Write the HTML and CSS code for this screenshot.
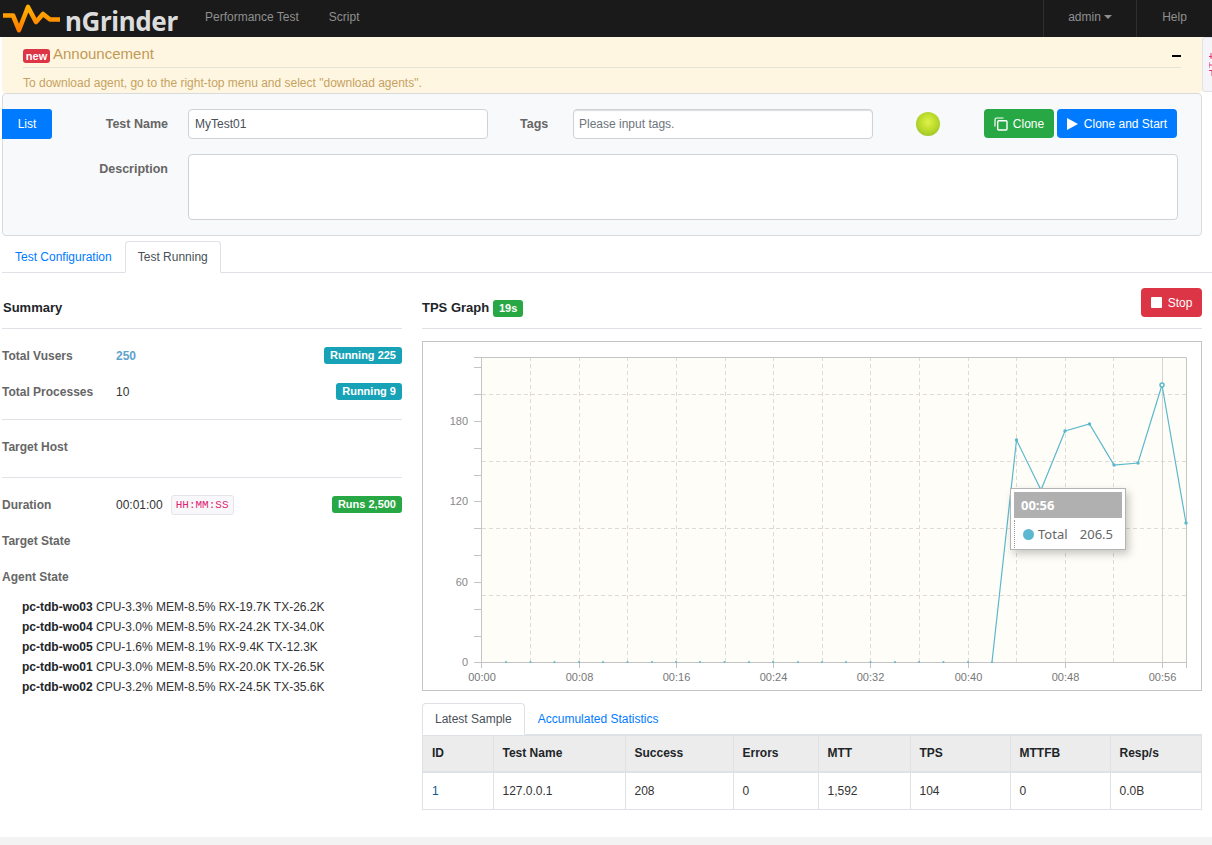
FILE: index.html
```html
<!DOCTYPE html>
<html lang="en">
<head>
<meta charset="utf-8">
<title>nGrinder</title>
<link rel="stylesheet" href="styles.css">
</head>
<body>
<nav class="navbar">
  <div class="brand">
    <svg class="logo" width="62" height="36" viewBox="0 0 62 36" aria-hidden="true">
      <defs><linearGradient id="lg" x1="0" x2="0" y1="0" y2="1"><stop offset="0" stop-color="#ffb000"/><stop offset="1" stop-color="#ff7d00"/></linearGradient></defs>
      <path d="M3 14.500H13L19 29L28 6L36 21L43 13L50 18.500H60" fill="none" stroke="url(#lg)" stroke-width="4.600" stroke-linejoin="round"/>
    </svg>
    <span class="brand-name">nGrinder</span>
  </div>
  <a class="nav-link perf">Performance Test</a>
  <a class="nav-link">Script</a>
  <div class="nav-right">
    <a class="nav-cell admin">admin<i class="caret"></i></a>
    <a class="nav-cell help">Help</a>
  </div>
</nav>

<section class="announce">
  <div class="announce-head">
    <span class="new">new</span><span class="announce-title">Announcement</span>
    <i class="minus"></i>
  </div>
  <p class="announce-text">To download agent, go to the right-top menu and select "download agents".</p>
</section>
<aside class="side-tab" aria-hidden="true">
  <svg width="4" height="30" viewBox="0 0 4 30"><path d="M0 5.500H4M2 2V8M0 11V17M0 14H4M0 19.500H4M3 19V25" stroke="#e8336a" fill="none"/></svg>
</aside>

<section class="well">
  <div class="form-row first">
    <a class="btn btn-blue list">List</a>
    <label class="label name-label">Test Name</label>
    <input class="input name-input" value="MyTest01">
    <label class="label tags-label">Tags</label>
    <input class="input tags-input" placeholder="Please input tags.">
    <i class="ball"></i>
    <a class="btn btn-green clone">
      <svg width="14" height="14" viewBox="0 0 14 14" aria-hidden="true"><path d="M9.500 1H2.500A1.500 1.500 0 0 0 1 2.500V9.500" fill="none" stroke="#fff" stroke-width="1.200"/><rect x="3.700" y="3.700" width="9.300" height="9.300" rx="1" fill="none" stroke="#fff" stroke-width="1.400"/></svg>
      Clone
    </a>
    <a class="btn btn-blue start">
      <svg width="11" height="12" viewBox="0 0 11 12" aria-hidden="true"><path d="M0 0L11 6L0 12Z" fill="#fff"/></svg>
      Clone and Start
    </a>
  </div>
  <div class="form-row second">
    <label class="label desc-label">Description</label>
    <textarea class="input desc"></textarea>
  </div>
</section>

<div class="tabs main-tabs">
  <a class="tab">Test Configuration</a>
  <a class="tab active">Test Running</a>
</div>

<main class="content">
  <div class="left">
    <h4 class="head">Summary</h4>
    <div class="row sp1"><span class="key">Total Vusers</span><span class="val link">250</span><span class="badge info">Running 225</span></div>
    <div class="row"><span class="key">Total Processes</span><span class="val">10</span><span class="badge info">Running 9</span></div>
    <hr class="rule r1">
    <div class="row"><span class="key">Target Host</span></div>
    <hr class="rule r2">
    <div class="row"><span class="key">Duration</span><span class="val">00:01:00</span><code class="code">HH:MM:SS</code><span class="badge ok">Runs 2,500</span></div>
    <div class="row"><span class="key">Target State</span></div>
    <div class="row"><span class="key">Agent State</span></div>
    <ul class="agents">
      <li><b>pc-tdb-wo03</b> CPU-3.3% MEM-8.5% RX-19.7K TX-26.2K</li>
      <li><b>pc-tdb-wo04</b> CPU-3.0% MEM-8.5% RX-24.2K TX-34.0K</li>
      <li><b>pc-tdb-wo05</b> CPU-1.6% MEM-8.1% RX-9.4K TX-12.3K</li>
      <li><b>pc-tdb-wo01</b> CPU-3.0% MEM-8.5% RX-20.0K TX-26.5K</li>
      <li><b>pc-tdb-wo02</b> CPU-3.2% MEM-8.5% RX-24.5K TX-35.6K</li>
    </ul>
  </div>

  <div class="right">
    <div class="head graph-head">
      <h4 class="graph-title">TPS Graph</h4><span class="badge ok secs">19s</span>
      <a class="btn btn-red stop"><i class="stop-icon"></i>Stop</a>
    </div>
    <div class="chart">
      <svg class="plot" width="778" height="348" viewBox="423 342 778 348">
        <rect x="482" y="357" width="704" height="305" fill="#fffdf7"/>
        <path d="M530.500 357V662M579.500 357V662M627.500 357V662M676.500 357V662M725.500 357V662M773.500 357V662M822.500 357V662M870.500 357V662M919.500 357V662M968.500 357V662M1016.500 357V662M1065.500 357V662M1113.500 357V662M482 394.500H1186M482 461.500H1186M482 528.500H1186M482 595.500H1186" stroke="#dedbd6" stroke-dasharray="4 3" fill="none"/>
        <path d="M1162.500 357V662" stroke="#d4d4d4" fill="none"/>
        <path d="M482 357.500H1186.500V668M481.500 357V668M482 662.500H1186M474 357.500H482M474 367.500H482M474 394.500H482M474 421.500H482M474 448.500H482M474 475.500H482M474 501.500H482M474 528.500H482M474 555.500H482M474 582.500H482M474 609.500H482M474 636.500H482M474 662.500H482M579.500 662V668M676.500 662V668M773.500 662V668M870.500 662V668M968.500 662V668M1065.500 662V668M1162.500 662V668" stroke="#c4c4c4" fill="none"/>
        <polyline points="992,662 1016.500,440 1041,490 1065,431 1089.500,424 1114,465 1138,463 1162,385 1186,523" fill="none" stroke="#5bb8cc" stroke-width="1.200"/>
        <g class="dots">
          <circle cx="506" cy="662" r="1"/><circle cx="530.500" cy="662" r="1"/><circle cx="554.500" cy="662" r="1"/><circle cx="579" cy="662" r="1"/><circle cx="603" cy="662" r="1"/><circle cx="627.500" cy="662" r="1"/><circle cx="652" cy="662" r="1"/><circle cx="676" cy="662" r="1"/><circle cx="700" cy="662" r="1"/><circle cx="724.500" cy="662" r="1"/><circle cx="749" cy="662" r="1"/><circle cx="773" cy="662" r="1"/><circle cx="798" cy="662" r="1"/><circle cx="822" cy="662" r="1"/><circle cx="846" cy="662" r="1"/><circle cx="870.500" cy="662" r="1"/><circle cx="895" cy="662" r="1"/><circle cx="919" cy="662" r="1"/><circle cx="943.500" cy="662" r="1"/><circle cx="968" cy="662" r="1"/><circle cx="992" cy="662" r="1"/>
          <circle cx="1016.500" cy="440" r="1.700"/><circle cx="1065" cy="431" r="1.700"/><circle cx="1089.500" cy="424" r="1.700"/><circle cx="1114" cy="465" r="1.700"/><circle cx="1138" cy="463" r="1.700"/><circle cx="1186" cy="523" r="1.700"/>
        </g>
        <circle cx="1162" cy="385" r="2" fill="#fffdf7" stroke="#5bb8cc" stroke-width="1.500"/>
        <g class="ylab"><text x="468" y="425">180</text><text x="468" y="505">120</text><text x="468" y="586">60</text><text x="468" y="666">0</text></g>
        <g class="xlab"><text x="482" y="681">00:00</text><text x="579.500" y="681">00:08</text><text x="676.500" y="681">00:16</text><text x="773.500" y="681">00:24</text><text x="870.500" y="681">00:32</text><text x="968.500" y="681">00:40</text><text x="1065.500" y="681">00:48</text><text x="1162.500" y="681">00:56</text></g>
      </svg>
      <div class="tooltip">
        <div class="tip-head">00:56</div>
        <div class="tip-body"><i class="tip-dot"></i><span>Total</span><span class="tip-val">206.5</span></div>
      </div>
    </div>
    <div class="tabs sub-tabs">
      <a class="tab active">Latest Sample</a>
      <a class="tab">Accumulated Statistics</a>
    </div>
    <table class="stats">
      <colgroup><col class="c1"><col class="c2"><col class="c3"><col class="c4"><col class="c5"><col class="c6"><col class="c7"><col class="c8"></colgroup>
      <thead><tr><th>ID</th><th>Test Name</th><th>Success</th><th>Errors</th><th>MTT</th><th>TPS</th><th>MTTFB</th><th>Resp/s</th></tr></thead>
      <tbody><tr><td class="link-id">1</td><td>127.0.0.1</td><td>208</td><td>0</td><td>1,592</td><td>104</td><td>0</td><td>0.0B</td></tr></tbody>
    </table>
  </div>
</main>
<footer class="footer"></footer>
</body>
</html>
```

FILE: styles.css
```css
* { box-sizing: border-box; }
html, body { margin: 0; padding: 0; height: 845px; overflow: hidden; }
body { position: relative; background: #fff; color: #212529; font: 12px/18px "Liberation Sans", Arial, sans-serif; }
a { text-decoration: none; cursor: pointer; }

.navbar { display: flex; align-items: center; height: 37px; background: #1a1a1a; }
.brand { display: flex; align-items: center; width: 205px; height: 37px; flex: none; }
.logo { flex: none; }
.brand-name { margin: 5px 0 0 3px; font: 700 26px/32px "Noto Sans", sans-serif; color: #dcdcdc; letter-spacing: -.35px; }
.nav-link { color: #8f8f8f; margin-right: 30px; padding-bottom: 3px; }
.nav-right { display: flex; margin-left: auto; height: 37px; }
.nav-cell { display: flex; align-items: center; justify-content: center; color: #8f8f8f; border-left: 1px solid #2e2e2e; padding-bottom: 3px; }
.admin { width: 93px; }
.help { width: 76px; }
.caret { display: inline-block; margin-left: 3px; margin-top: -1px; border-top: 4px solid #8f8f8f; border-left: 4px solid transparent; border-right: 4px solid transparent; }

.announce { height: 56px; margin-left: 2px; margin-right: 10px; padding: 0 21px; background: #fff6e1; border-radius: 0 0 4px 4px; }
.announce-head { display: flex; align-items: center; height: 31px; border-bottom: 1px solid #e2e2dc; padding-top: 4px; }
.new { display: inline-block; width: 27px; height: 14px; background: #dc3545; color: #fff; font: 700 11px/14px "Liberation Sans", sans-serif; text-align: center; border-radius: 3px; margin-top: 4px; }
.announce-title { margin-left: 3px; font-size: 15px; color: #bf9a57; }
.minus { width: 9px; height: 2px; margin-left: auto; margin-top: 3px; background: #000; }
.announce-text { margin: 6px 0 0; color: #c5a261; }
.side-tab { position: absolute; left: 1202px; top: 37px; width: 10px; height: 55px; background: #f5f5f9; border: 1px solid #e2e2e6; border-right: 0; border-radius: 3px 0 0 3px; padding: 13px 0 0 6px; line-height: 0; }

.well { height: 143px; margin: 0 10px 0 2px; background: #f8f9fa; border: 1px solid #d9dade; border-radius: 4px; padding-top: 15px; }
.form-row { display: flex; }
.form-row.first { height: 30px; align-items: flex-start; margin-left: -1px; }
.form-row.second { height: 66px; margin-top: 15px; margin-left: -1px; }
.btn { display: inline-flex; align-items: center; justify-content: center; color: #fff; border-radius: 4px; font-size: 12px; font-weight: 400; }
.btn-blue { background: #007bff; }
.btn-green { background: #28a745; }
.btn-red { background: #dc3545; }
.list { width: 50px; height: 30px; border-radius: 0 3px 3px 0; }
.label { color: #666; font-size: 12.500px; font-weight: 700; line-height: 30px; }
.name-label { width: 116px; text-align: right; }
.input { display: block; height: 30px; padding: 0 6px; background: #fff; border: 1px solid #cfd3d7; border-radius: 4px; color: #495057; font: 12px "Liberation Sans", sans-serif; outline: 0; }
.input::placeholder { color: #6c757d; opacity: 1; }
.name-input { width: 300px; margin-left: 20px; }
.tags-label { width: 32px; margin-left: 32px; }
.tags-input { width: 300px; margin-left: 21px; padding: 0 5px; box-shadow: inset 0 1px 1px #ddd; }
.ball { width: 24px; height: 24px; margin: 3px 0 0 43px; border-radius: 50%; background: radial-gradient(circle at 50% 42%, #dff24a 0, #bcdc2c 45%, #8fb52c 100%); }
.clone { width: 70px; height: 29px; margin-left: 44px; gap: 5px; }
.start { width: 120px; height: 29px; margin-left: 3px; gap: 6px; }
.desc-label { width: 166px; text-align: right; line-height: 30px; }
.desc { width: 990px; height: 66px; margin-left: 20px; resize: none; }

.tabs { display: flex; border-bottom: 1px solid #dee2e6; }
.tab { color: #007bff; padding: 0 12px; margin-bottom: -1px; border: 1px solid transparent; border-radius: 4px 4px 0 0; }
.tab.active { color: #495057; background: #fff; border-color: #dee2e6 #dee2e6 #fff; }
.main-tabs { height: 32px; margin: 5px 0 0 2px; padding: 0; }
.main-tabs .tab { height: 32px; line-height: 30px; }
.sub-tabs { height: 32px; margin-top: 12px; }
.sub-tabs .tab { height: 32px; line-height: 30px; }

.content { display: flex; margin: 0 10px 0 2px; }
.left { width: 400px; flex: none; }
.right { width: 780px; flex: none; margin-left: 20px; }
.head { height: 56px; margin: 0; padding-top: 25px; border-bottom: 1px solid #dee2e6; font-size: 13px; font-weight: 700; line-height: 20px; }
.left .head { padding-left: 1px; }
.row { display: flex; align-items: center; height: 36px; }
.row.sp1 { margin-top: 9px; }
.key { width: 114px; flex: none; color: #666; font-weight: 700; }
.val { color: #333; }
.val.link { color: #5fa3cc; font-weight: 700; }
.badge { display: inline-block; height: 17px; padding: 0 6px; color: #fff; font-size: 11px; font-weight: 700; line-height: 17px; border-radius: 3px; }
.row .badge { margin-left: auto; margin-top: -1px; }
.info { background: #17a2b8; }
.ok { background: #28a745; }
.rule { height: 1px; margin: 0; border: 0; background: #dee2e6; }
.r1 { margin-top: 9px; }
.r1 + .row { margin-top: 9px; }
.r2 { margin-top: 12px; }
.r2 + .row { margin-top: 9px; }
.code { height: 20px; margin-left: 8px; padding: 0 4px; background: #f8f8fb; border: 1px solid #e4e4ea; border-radius: 3px; color: #e0246f; font: 11px/18px "Liberation Mono", monospace; }
.agents { margin: 2px 0 0; padding: 0 0 0 20px; list-style: none; color: #333; }
.agents li { height: 20px; line-height: 20px; white-space: nowrap; }
.agents b { color: #212529; }

.graph-head { position: relative; display: flex; align-items: flex-start; }
.graph-title { margin: 0; font-size: 13px; line-height: 20px; }
.secs { margin: 2px 0 0 4px; width: 30px; padding: 0; text-align: center; }
.stop { position: absolute; right: 0; top: 15px; width: 61px; height: 29px; gap: 6px; }
.stop-icon { width: 11px; height: 11px; background: #fff; border-radius: 1px; }
.chart { position: relative; height: 350px; margin-top: 12px; border: 1px solid #c4c4c4; }
.plot { display: block; }
.dots circle { fill: #5bb8cc; }
.ylab text { fill: #888; font-size: 11px; text-anchor: end; }
.xlab text { fill: #777; font-size: 11px; text-anchor: middle; }
.tooltip { position: absolute; left: 587px; top: 146px; width: 116px; height: 62px; padding: 3px; background: rgba(255,255,255,.96); border: 1px solid #b4b4b4; box-shadow: 3px 4px 8px rgba(0,0,0,.22); }
.tip-head { height: 26px; padding-left: 7px; background: #b0b0b0; color: #fff; font: 700 13px/26px "Noto Sans", sans-serif; }
.tip-body { display: flex; align-items: center; height: 28px; margin-top: 2px; padding: 0 9px 0 8px; border-left: 1px dotted #999; color: #666; font: 13px "Noto Sans", sans-serif; }
.tip-dot { width: 11px; height: 11px; margin-right: 4px; border-radius: 50%; background: #5bb8d0; }
.tip-val { margin-left: auto; }

.stats { width: 779px; border-collapse: collapse; table-layout: fixed; }
.c1 { width: 70.500px; } .c2 { width: 132px; } .c3 { width: 108px; } .c4 { width: 85px; } .c5 { width: 92px; } .c6 { width: 100px; } .c7 { width: 100px; } .c8 { width: 91.500px; }
.stats th, .stats td { padding: 0 9px; border: 1px solid #dee2e6; text-align: left; }
.stats th { height: 36px; background: #ececec; color: #212529; border-bottom-width: 2px; }
.stats td { height: 38px; color: #333; }
.stats td.link-id { color: #0a5a8c; }
.footer { position: absolute; left: 0; right: 0; top: 837px; height: 8px; background: #f3f3f3; }
```
